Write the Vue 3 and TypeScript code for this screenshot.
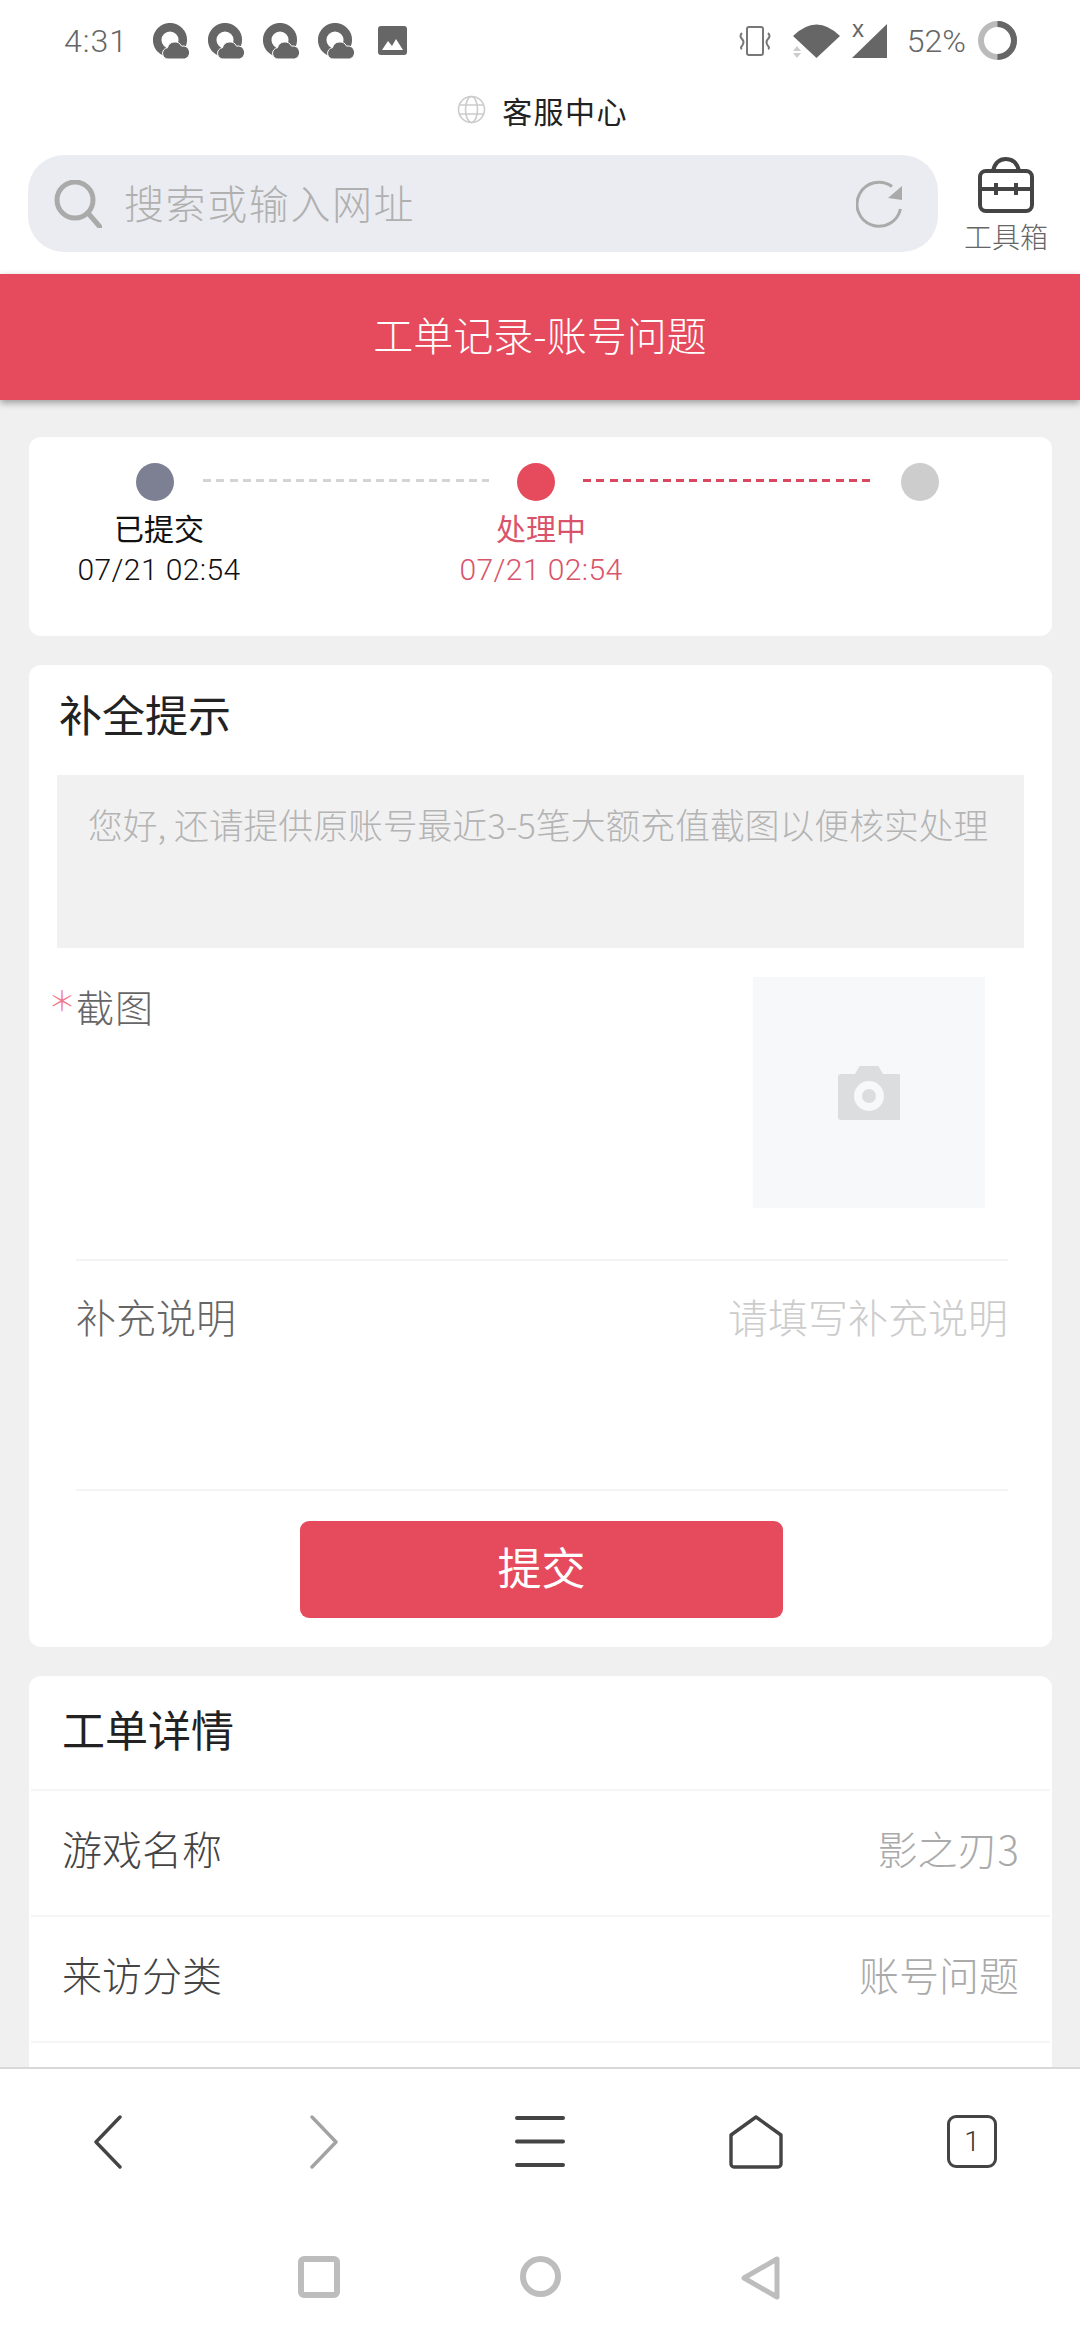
<template>
  <div class="page">
    <!-- status bar -->
    <div class="status-bar">
      <div class="status-left">
        <span class="clock">4:31</span>
        <svg v-for="n in 4" :key="n" class="q-icon" width="36" height="36" viewBox="0 0 36 36">
          <circle cx="17" cy="17" r="12.800" fill="none" stroke="#666" stroke-width="8.500" />
          <path d="M16 36a5.500 5.500 0 0 1-1.500-11.300a7.500 7.500 0 0 1 14-1.600a6.500 6.500 0 0 1 3 12.900z" fill="#666" stroke="#fff" stroke-width="1" />
        </svg>
        <svg class="pic-icon" width="29" height="29" viewBox="0 0 29 29">
          <rect width="29" height="29" rx="3" fill="#666" />
          <path d="M4 24l6-9l4 5l4-7l7 11z" fill="#fff" />
        </svg>
      </div>
      <div class="status-right">
        <svg width="34" height="30" viewBox="0 0 34 30" fill="none" stroke="#777" stroke-width="2">
          <rect x="9" y="1" width="16" height="28" rx="2" />
          <path d="M4 7q-3 3 0 6q3 3 0 7q-2 2 0 3" />
          <path d="M30 7q3 3 0 6q-3 3 0 7q2 2 0 3" />
        </svg>
        <svg width="47" height="34" viewBox="0 0 47 34">
          <path d="M0 12Q23.500-11 47 12L23.500 34z" fill="#666" />
          <path d="M4 22l4 5h-8zM4 34l4-5h-8z" fill="#ccc" />
        </svg>
        <svg class="signal" width="35" height="46" viewBox="0 -12 35 46">
          <path d="M35 0V34H0z" fill="#666" />
          <text x="0" y="13" class="signal-x">x</text>
        </svg>
        <span class="battery-text">52%</span>
        <svg width="39" height="39" viewBox="0 0 39 39" fill="none" stroke-width="6">
          <circle cx="19.500" cy="19.500" r="16.500" stroke="#bbb" />
          <path d="M19.500 3a16.500 16.500 0 0 1 0 33" stroke="#666" />
        </svg>
      </div>
    </div>

    <!-- browser chrome -->
    <div class="site-row">
      <svg width="29" height="29" viewBox="0 0 29 29" fill="none" stroke="#ccc" stroke-width="1.600">
        <circle cx="14.500" cy="14.500" r="13" />
        <ellipse cx="14.500" cy="14.500" rx="6" ry="13" />
        <path d="M2 10h25M2 19h25" />
      </svg>
      <span class="site-name">客服中心</span>
    </div>
    <div class="search-row">
      <div class="search-box">
        <svg width="48" height="48" viewBox="0 0 48 48" fill="none" stroke="#aaa" stroke-width="5">
          <circle cx="21" cy="20" r="18" />
          <path d="M34 33l12 14" stroke-linecap="round" />
        </svg>
        <span class="search-text">搜索或输入网址</span>
        <svg class="refresh" width="48" height="48" viewBox="0 0 48 48" fill="none">
          <path d="M36 6.500A22 22 0 1 0 44.500 29" stroke="#aaa" stroke-width="3" />
          <path d="M46 6V20L32 18z" fill="#aaa" />
        </svg>
      </div>
      <div class="toolbox">
        <svg width="56" height="56" viewBox="0 0 56 56" fill="none" stroke="#444" stroke-width="4">
          <rect x="2" y="14" width="52" height="40" rx="6" />
          <path d="M15 14C17 5 22 2 28 2s11 3 13 12" />
          <path d="M2 32H54M18 26v12M38 26v12" />
        </svg>
        <span class="toolbox-label">工具箱</span>
      </div>
    </div>

    <header class="red-header">工单记录-账号问题</header>

    <main class="content">
      <!-- progress -->
      <section class="card steps">
        <div class="track">
          <i class="dot dot-done"></i>
          <i class="dash dash-grey"></i>
          <i class="dot dot-active"></i>
          <i class="dash dash-red"></i>
          <i class="dot dot-todo"></i>
        </div>
        <div class="step-labels">
          <div v-for="s in steps" :key="s.name" class="step-label" :class="{ active: s.active }">
            <div>{{ s.name }}</div>
            <div class="step-time">{{ s.time }}</div>
          </div>
        </div>
      </section>

      <!-- supplement form -->
      <section class="card form-card">
        <h2 class="form-title">补全提示</h2>
        <div class="notice">您好, 还请提供原账号最近3-5笔大额充值截图以便核实处理</div>
        <div class="upload-row">
          <div class="upload-label"><span class="star">＊</span><span class="shot">截图</span></div>
          <div class="upload-box">
            <svg width="62" height="54" viewBox="0 0 62 54">
              <path d="M3 8h14l4-7a2 2 0 0 1 2-1h16a2 2 0 0 1 2 1l4 7h15a3 3 0 0 1 3 3v40a3 3 0 0 1-3 3H3a3 3 0 0 1-3-3V11a3 3 0 0 1 3-3z" fill="#dcddde" />
              <circle cx="31" cy="30" r="15" fill="#f7f8fa" />
              <circle cx="31" cy="30" r="7" fill="#dcddde" />
            </svg>
          </div>
        </div>
        <div class="desc-row">
          <span class="desc-label">补充说明</span>
          <span class="desc-hint">请填写补充说明</span>
        </div>
        <button class="submit">提交</button>
      </section>

      <!-- ticket details -->
      <section class="card detail-card">
        <h2 class="detail-title">工单详情</h2>
        <div v-for="r in details" :key="r.key" class="detail-row">
          <span class="detail-key">{{ r.key }}</span>
          <span class="detail-val">{{ r.val }}</span>
        </div>
        <div class="detail-row"></div>
      </section>
    </main>

    <!-- browser toolbar -->
    <nav class="toolbar">
      <svg width="30" height="54" viewBox="0 0 30 54" fill="none" stroke="#444" stroke-width="3.400" stroke-linecap="round" stroke-linejoin="round">
        <path d="M27 2L3 27l24 25" />
      </svg>
      <svg width="30" height="54" viewBox="0 0 30 54" fill="none" stroke="#a3a3a3" stroke-width="3.400" stroke-linecap="round" stroke-linejoin="round">
        <path d="M3 2l24 25L3 52" />
      </svg>
      <svg width="50" height="52" viewBox="0 0 50 52" fill="none" stroke="#444" stroke-width="4" stroke-linecap="round">
        <path d="M2 3h46M2 26.500h46M2 50h46" />
      </svg>
      <svg width="54" height="54" viewBox="0 0 54 54" fill="none" stroke="#444" stroke-width="3.400" stroke-linejoin="round">
        <path d="M27 2L52 20V49a3 3 0 0 1-3 3H5a3 3 0 0 1-3-3V20z" />
      </svg>
      <div class="tab-count">1</div>
    </nav>

    <!-- android nav -->
    <div class="sys-nav">
      <span class="sys-square"></span>
      <span class="sys-circle"></span>
      <svg width="40" height="44" viewBox="0 0 40 44" fill="none" stroke="#bdbdbd" stroke-width="5" stroke-linejoin="round">
        <path d="M36 3V41L3 22z" />
      </svg>
    </div>
  </div>
</template>

<script setup lang="ts">
interface Step {
  name: string;
  time: string;
  active?: boolean;
}

const steps: Step[] = [
  { name: '已提交', time: '07/21 02:54' },
  { name: '处理中', time: '07/21 02:54', active: true }
];

const details = [
  { key: '游戏名称', val: '影之刃3' },
  { key: '来访分类', val: '账号问题' }
];
</script>

<style>
html,
body {
  margin: 0;
  background: #fff;
}
</style>

<style scoped>
.page {
  width: 1080px;
  height: 2340px;
  display: flex;
  flex-direction: column;
  overflow: hidden;
  background: #fff;
  font-family: "Noto Sans CJK SC", "Noto Sans", sans-serif;
  font-weight: 300;
}

.status-bar {
  height: 80px;
  flex: none;
  display: flex;
  justify-content: space-between;
  align-items: center;
  padding: 1px 63px 0 64px;
  box-sizing: border-box;
  color: #666;
  font-family: Roboto, sans-serif;
  font-weight: 300;
  font-size: 32px;
}

.status-left {
  display: flex;
  align-items: center;
  gap: 19px;
}

.clock {
  width: 70px;
  letter-spacing: 1px;
}

.pic-icon {
  margin-left: 5px;
}

.status-right {
  display: flex;
  align-items: center;
  gap: 12px;
}

.status-right > svg:nth-child(2) {
  margin-left: 9px;
}

.signal {
  margin-top: -12px;
}

.battery-text {
  margin-left: 8px;
}

.signal-x {
  font-family: "Liberation Sans", sans-serif;
  font-size: 24px;
  font-weight: 400;
  fill: #666;
}

.site-row {
  height: 64px;
  flex: none;
  box-sizing: border-box;
  display: flex;
  justify-content: center;
  align-items: center;
  gap: 16px;
  padding: 0 0 5px 5px;
}

.site-name {
  font-size: 30px;
  letter-spacing: 1.400px;
  color: #222;
  font-weight: 400;
}

.search-row {
  flex: none;
  height: 130px;
  box-sizing: border-box;
  padding: 11px 32px 0 28px;
  display: flex;
  justify-content: space-between;
}

.search-box {
  width: 910px;
  height: 97px;
  border-radius: 36px;
  background: #ebecf1;
  display: flex;
  align-items: center;
  padding: 0 34px 0 26px;
  box-sizing: border-box;
}

.search-text {
  margin: 0 0 3px 22px;
  font-size: 40px;
  letter-spacing: 1.600px;
  color: #b0b0b0;
}

.refresh {
  margin-left: auto;
}

.toolbox {
  width: 84px;
  display: flex;
  flex-direction: column;
  align-items: center;
  margin-top: 2px;
}

.toolbox-label {
  font-size: 28px;
  line-height: 28px;
  margin-top: 9px;
  color: #666;
  white-space: nowrap;
}

.red-header {
  flex: none;
  height: 126px;
  line-height: 120px;
  background: #e64a5d;
  color: #fff;
  text-align: center;
  font-size: 40px;
  box-shadow: 0 3px 7px rgba(0, 0, 0, 0.35);
  position: relative;
}

.content {
  flex: 1;
  min-height: 0;
  overflow: hidden;
  background: #f0f0f1;
  padding: 37px 28px 0 29px;
  display: flex;
  flex-direction: column;
  gap: 29px;
}

.card {
  background: #fff;
  border-radius: 12px;
  flex: none;
}

.steps {
  height: 199px;
  padding-top: 26px;
  box-sizing: border-box;
}

.track {
  display: flex;
  align-items: center;
  padding-left: 107px;
}

.dot {
  width: 38px;
  height: 38px;
  border-radius: 50%;
  flex: none;
}

.dot-done {
  background: #7d7f93;
}

.dot-active {
  background: #e64a5d;
}

.dot-todo {
  background: #cdcdcd;
}

.dash {
  height: 3px;
  margin-top: -4px;
  flex: none;
}

.dash-grey {
  width: 286px;
  margin-left: 29px;
  margin-right: 28px;
  background: repeating-linear-gradient(90deg, #d4d4d4 0 8px, transparent 8px 13.300px);
}

.dash-red {
  width: 287px;
  margin-left: 28px;
  margin-right: 31px;
  background: repeating-linear-gradient(90deg, #d9485e 0 8px, transparent 8px 13.300px);
}

.step-labels {
  display: grid;
  grid-template-columns: 200px 200px;
  column-gap: 182px;
  padding-left: 30px;
  margin-top: 6px;
}

.step-label {
  text-align: center;
  font-size: 30px;
  line-height: 40px;
  color: #111;
  font-weight: 400;
}

.step-label.active {
  color: #d9546a;
}

.step-time {
  margin-top: 3px;
  font-family: Roboto, sans-serif;
  font-size: 30px;
  font-weight: 300;
  letter-spacing: 0.400px;
}

.form-card {
  height: 982px;
  box-sizing: border-box;
}

.form-title {
  margin: 0;
  height: 110px;
  line-height: 97px;
  padding-left: 30px;
  font-size: 43px;
  font-weight: 400;
  color: #222;
}

.notice {
  margin: 0 28px;
  height: 173px;
  box-sizing: border-box;
  background: #f1f1f2;
  padding: 25px 0 0 31px;
  font-size: 34.800px;
  line-height: 48px;
  color: #b4b4b4;
  white-space: nowrap;
}

.upload-row {
  display: flex;
  justify-content: space-between;
  margin-top: 29px;
  padding: 0 67px 0 19px;
  height: 282px;
  box-sizing: border-box;
}

.upload-label {
  display: flex;
  align-items: flex-start;
  font-size: 38px;
  line-height: 58px;
  color: #666;
}

.shot {
  letter-spacing: 1px;
}

.star {
  width: 28px;
  flex: none;
  color: #ef7a8a;
  font-size: 28px;
  line-height: 46px;
}

.upload-box {
  width: 232px;
  height: 231px;
  background: #f7f8fa;
  display: flex;
  justify-content: center;
  align-items: center;
}

.desc-row {
  margin: 0 44px 0 47px;
  height: 232px;
  box-sizing: border-box;
  border-top: 2px solid #f4f4f4;
  border-bottom: 2px solid #f4f4f4;
  display: flex;
  justify-content: space-between;
  padding-top: 27px;
  font-size: 40px;
  line-height: 56px;
}

.desc-label {
  color: #666;
}

.desc-hint {
  color: #ccc;
}

.submit {
  display: block;
  margin: 30px auto 0 271px;
  width: 483px;
  height: 97px;
  border: none;
  border-radius: 9px;
  background: #e64a5d;
  color: #fff;
  font-family: inherit;
  font-size: 44px;
  font-weight: 400;
  padding: 0 0 8px;
}

.detail-title {
  margin: 0;
  height: 113px;
  line-height: 104px;
  padding-left: 33px;
  font-size: 43px;
  font-weight: 400;
  color: #222;
}

.detail-card {
  display: flex;
  flex-direction: column;
}

.detail-row {
  height: 126px;
  box-sizing: border-box;
  border-top: 2px solid #f5f5f5;
  margin: 0 2px;
  padding: 0 31px 10px;
  display: flex;
  justify-content: space-between;
  align-items: center;
  font-size: 40px;
  flex: none;
}

.detail-key {
  color: #444;
}

.detail-val {
  color: #aaa;
}

.toolbar {
  flex: none;
  height: 167px;
  box-sizing: border-box;
  border-top: 2px solid #d8d8d8;
  background: #fff;
  display: grid;
  grid-template-columns: repeat(5, 216px);
  justify-items: center;
  padding-top: 46px;
  align-items: start;
}

.tab-count {
  width: 50px;
  height: 53px;
  box-sizing: border-box;
  border: 3px solid #444;
  border-radius: 9px;
  display: flex;
  justify-content: center;
  align-items: center;
  font-family: Roboto, sans-serif;
  font-size: 28px;
  color: #333;
}

.sys-nav {
  flex: none;
  height: 106px;
  box-sizing: border-box;
  display: grid;
  grid-template-columns: repeat(3, 221px);
  justify-content: center;
  justify-items: center;
  align-items: start;
  padding-top: 22px;
  background: #fff;
}

.sys-square {
  width: 42px;
  height: 42px;
  box-sizing: border-box;
  border: 6px solid #bdbdbd;
  border-radius: 6px;
}

.sys-circle {
  width: 41px;
  height: 41px;
  box-sizing: border-box;
  border: 6px solid #bdbdbd;
  border-radius: 50%;
}
</style>
